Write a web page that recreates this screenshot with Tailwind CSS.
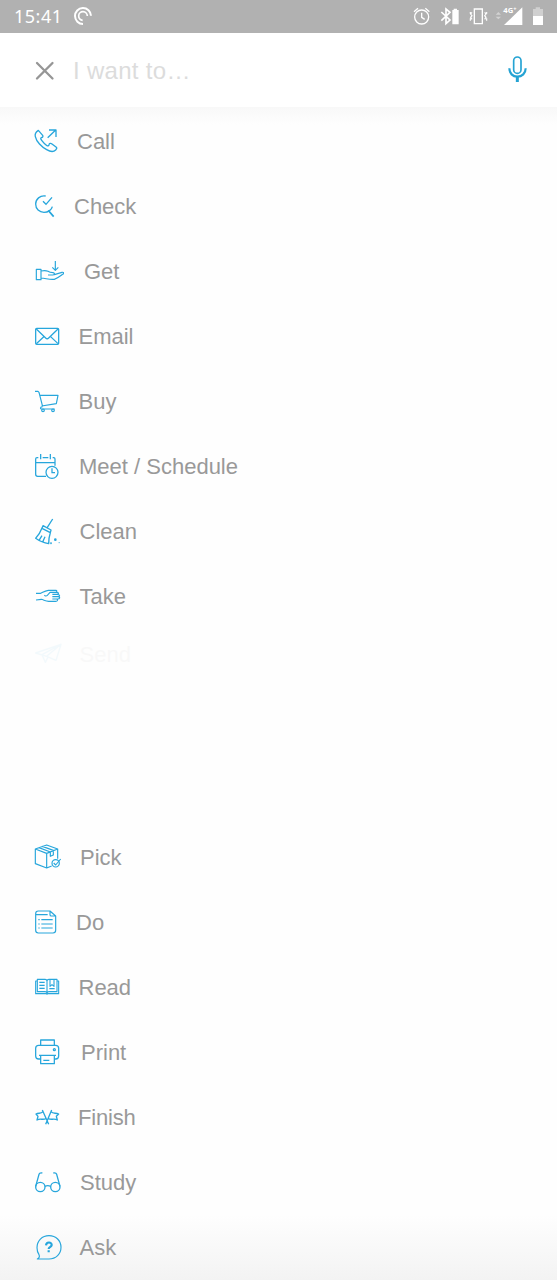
<!DOCTYPE html>
<html lang="en">
<head>
<meta charset="utf-8">
<meta name="viewport" content="width=device-width, initial-scale=1">
<title>I want to…</title>
<script src="https://cdn.jsdelivr.net/npm/@tailwindcss/browser@4"></script>
</head>
<body class="bg-white">
<div class="flex h-[1280px] w-[557px] flex-col overflow-hidden bg-[#fefefe] font-['Liberation_Sans',Arial,sans-serif] text-[22px] text-[#999999]">
  <header class="flex h-[33px] shrink-0 items-center bg-[#b1b1b1] text-white">
    <span class="ml-[14px] w-[58px] font-['Noto_Sans',sans-serif] text-[18px] leading-[33px] tracking-[0.5px]">15:41</span>
    <svg class="h-[33px] w-[24px]" viewBox="216 0 72 99" fill="none" stroke="#fff">
      <path stroke-width="6" d="M273 47A24 24 0 1 0 249 72"/>
      <path stroke-width="5" d="M262 48A13 13 0 1 0 248 61"/>
    </svg>
    <svg class="ml-auto h-[33px] w-[147px]" viewBox="60 0 441 99" fill="none" stroke="#fff" stroke-width="4">
      <circle cx="95" cy="51" r="21"/><path d="M95 38v14l9 6M72 35l12-10M118 35l-12-10"/>
      <path stroke-width="5" d="M154 36l26 24-12 11V27l12 10-26 25"/>
      <path fill="#fff" stroke="none" d="M187 30h4v-4h10v4h5v43h-19z"/>
      <path d="M253 27h24v44h-24z"/><path stroke-width="3.5" d="M246 37l-4 5 4 5-4 5 4 6M241 36v5M241 55v7M284 37l4 5-4 5 4 5-4 6M290 36v5M290 55v7"/>
      <path fill="#d2d2d2" stroke="none" d="M317 44l8-8 8 8zM317 50h16l-8 8z"/>
      <path fill="#fff" stroke="none" d="M342 75l55-53v53z"/>
      <text x="340" y="38" fill="#fff" stroke="#b1b1b1" stroke-width="4" paint-order="stroke" font-size="23" font-weight="700" class="font-['Noto_Sans',sans-serif]">4G<tspan font-size="17" dy="-6">+</tspan></text>
      <path fill="#d0d0d0" stroke="none" d="M429 27h8v-5h13v5h9v21h-30z"/><path fill="#fff" stroke="none" d="M429 48h30v27h-30z"/>
    </svg>
  </header>
  <div class="flex h-[74px] shrink-0 items-center bg-white">
    <svg class="ml-[32px] h-[24px] w-[24px]" viewBox="0 0 24 24" stroke="#969696" stroke-width="2.3" stroke-linecap="round"><path d="M5 5l15.500 15.500M20.500 5L5 20.500"/></svg>
    <span class="ml-[17px] pt-[2px] text-[24px] leading-[74px] tracking-[0.3px] text-[#dcdcdc]">I want to…</span>
    <svg class="ml-auto mr-[28px] h-[32px] w-[24px]" viewBox="345 168 72 96" fill="none" stroke="#25a3d3" stroke-width="5">
      <rect x="371" y="177" width="22" height="49" rx="11"/><path d="M358 211c0 15 10 25 24 25s25-10 25-25" stroke-width="6.500"/><path d="M382 235v17" stroke-width="9"/>
    </svg>
  </div>
  <main class="flex flex-1 flex-col bg-linear-to-b from-[#f8f8f8] from-0% via-[#fefefe] via-[1.5%] to-[#fefefe]">
    <ul class="mt-[2px] flex flex-col fill-none stroke-[#27a6dc] leading-[65px]">
      <li class="flex h-[65px]">
        <svg class="ml-8 mt-4 size-8 shrink-0" viewBox="36 15 96 96" stroke-width="4" stroke-linejoin="round"><path d="M55 31l13 15c2 4 0 6-4 7-3 1-2 4 1 8 5 7 12 13 16 16 4 2 5 0 6-3 1-4 5-5 9-2l13 10c2 2 1 5-2 8-7 7-15 6-27-1C65 81 49 65 46 50c-2-8 1-14 9-19zM83 53l24-23M87 30h21v21"/></svg>
        <span class="ml-[13px]">Call</span>
      </li>
      <li class="flex h-[65px]">
        <svg class="ml-8 mt-4 size-8 shrink-0" viewBox="36 210 96 96" stroke-width="4"><path d="M77 228c-17-3-30 10-30 24 0 15 11 25 25 25 13 0 23-8 25-17M69 244l9 9 18-21"/><path stroke-width="5" d="M84 272l4 3 13 15"/></svg>
        <span class="ml-[10px]">Check</span>
      </li>
      <li class="flex h-[65px]">
        <svg class="ml-8 mt-4 size-8 shrink-0" viewBox="36 15 96 96" stroke-width="3.500" stroke-linejoin="round"><path d="M49 58h14v31H49zM63 63c9-2 15-2 21 1 4 3 8 4 15 4 5 0 6 6 0 7H84M103 74l23-7c5-1 7 3 2 6-8 6-15 12-25 15-14 2-25-3-40-4M106 33v28M97 52l9 9 9-9"/></svg>
        <span class="ml-[20px]">Get</span>
      </li>
      <li class="flex h-[65px]">
        <svg class="ml-8 mt-4 size-8 shrink-0" viewBox="36 210 96 96" stroke-width="3.800" stroke-linejoin="round"><rect x="47" y="235" width="69" height="48" rx="3"/><path d="M49 237l28 27c3 3 6 3 9 0l28-27M49 281l24-22M114 281l-23-22"/></svg>
        <span class="ml-[14.500px]">Email</span>
      </li>
      <li class="flex h-[65px]">
        <svg class="ml-8 mt-4 size-8 shrink-0" viewBox="36 15 96 96" stroke-width="3.500" stroke-linejoin="round"><path d="M45 34h9l3 3 11 43M59 46h55l-5 25-44 7M68 80c-8 0-8 7-3 7h39"/><circle cx="69" cy="91" r="4"/><circle cx="99" cy="91" r="4"/></svg>
        <span class="ml-[14.500px]">Buy</span>
      </li>
      <li class="flex h-[65px]">
        <svg class="ml-8 mt-4 size-8 shrink-0" viewBox="36 210 96 96" stroke-width="3.800"><path d="M55 233h-4q-4 0-4 4v46q0 6 6 6h25M68 233h17M98 233h3q4 0 4 4v20M47 248h58M62 222v16M91 222v16"/><circle cx="96" cy="277" r="18"/><path d="M96 265v13h9"/></svg>
        <span class="ml-[15px]">Meet / Schedule</span>
      </li>
      <li class="flex h-[65px]">
        <svg class="ml-8 mt-4 size-8 shrink-0" viewBox="36 15 96 96" stroke-width="4" stroke-linejoin="round"><path d="M98 27L82 52M69 47l24 13-2 8-25-13zM66 54c-5 13-10 22-19 31 11 8 24 14 39 16 0-12 1-21 5-33M57 91l9-14M68 96l7-16"/><circle cx="93" cy="100" r="1"/><circle cx="106" cy="89" r="2"/><path stroke-width="3" d="M116 98h3"/></svg>
        <span class="ml-[15.500px]">Clean</span>
      </li>
      <li class="flex h-[65px]">
        <svg class="ml-8 mt-4 size-8 shrink-0" viewBox="36 210 96 96" stroke-width="3.300" stroke-linejoin="round"><path d="M48 250h14c8-4 14-8 23-9h22c5 0 5 5 0 6H90l-8 9c-3 3-9 2-8-1M95 247h16c6 0 6 6 0 6H97M111 253c10 0 10 7 2 7H97M113 260c9 0 7 7 0 7H97M109 267c6 1 4 7-2 7H86c-9 0-14-4-22-6l-16 2"/></svg>
        <span class="ml-[15.500px]">Take</span>
      </li>
    </ul>
    <div class="mt-[-7px] flex h-[65px] leading-[65px] opacity-5">
      <svg class="ml-8 mt-4 size-8 shrink-0" viewBox="36 27 96 96" fill="none" stroke="#2caedd" stroke-width="4" stroke-linejoin="round"><path d="M47 72l76-26-15 48-28-12zM123 46L66 77l10 23 8-16M123 46L80 82"/></svg>
      <span class="ml-[15.500px]">Send</span>
    </div>
    <ul class="mt-[138px] flex flex-col fill-none stroke-[#27a6dc] leading-[65px]">
      <li class="flex h-[65px]">
        <svg class="ml-8 mt-4 size-8 shrink-0" viewBox="36 18 96 96" stroke-width="3.500" stroke-linejoin="round"><path d="M46 42l34-12 33 12-33 13zM46 42v44l34 13 15-6M80 55v44M113 42v29M57 38l34 13v13l9-4V46L67 34"/><circle cx="107" cy="85" r="11"/><path d="M101 84l6 6 15-18"/></svg>
        <span class="ml-[16px]">Pick</span>
      </li>
      <li class="flex h-[65px]">
        <svg class="ml-8 mt-4 size-8 shrink-0" viewBox="36 213 96 96" stroke-width="3.500" stroke-linejoin="round"><path d="M90 228H55q-8 0-8 8v50q0 8 8 8h44q8 0 8-8v-43zM90 228v11q0 4 4 4h13M47 239h36"/><path d="M55 254h4M64 254h34M55 267h4M64 267h34M55 279h4M64 279h34"/></svg>
        <span class="ml-[12px]">Do</span>
      </li>
      <li class="flex h-[65px]">
        <svg class="ml-8 mt-4 size-8 shrink-0" viewBox="36 18 96 96" stroke-width="3.300" stroke-linejoin="round"><path d="M52 43h23q6 0 6 6 0-6 6-6h24v37H87q-6 0-6 5 0-5-6-5H52zM52 48h-5v38h29q5 0 5 2 0-2 5-2h30V48h-5M81 49v37M58 52h16M58 61h16M58 70h16M90 43v21l6-5 6 5V43M88 71h16"/></svg>
        <span class="ml-[14.500px]">Read</span>
      </li>
      <li class="flex h-[65px]">
        <svg class="ml-8 mt-4 size-8 shrink-0" viewBox="36 213 96 96" stroke-width="3.800" stroke-linejoin="round"><path d="M62 241v-16h41v16M61 282h-5q-9 0-9-9v-23q0-9 9-9h51q9 0 9 9v23q0 9-9 9h-4M57 271h51M62 271v25h41v-25M70 286h18"/><circle cx="103" cy="254" r="3"/></svg>
        <span class="ml-[17px]">Print</span>
      </li>
      <li class="flex h-[65px]">
        <svg class="ml-8 mt-4 size-8 shrink-0" viewBox="36 18 96 96" stroke-width="4" stroke-linejoin="round"><path d="M67 45l19 43M95 45L77 88M69 50c-7 8-13 2-21 7l6 7-3 11c10-6 17 1 27-4M93 50c7 8 14 2 23 7l-7 7 3 11c-10-6-17 1-27-4"/></svg>
        <span class="ml-[14px] tracking-[-0.2px]">Finish</span>
      </li>
      <li class="flex h-[65px]">
        <svg class="ml-8 mt-4 size-8 shrink-0" viewBox="36 213 96 96" stroke-width="4"><circle cx="61" cy="276" r="14"/><circle cx="106" cy="276" r="14"/><path d="M75 274q8-4 17 0M47 274l10-36q2-6 10-4M120 274l-10-36q-2-6-10-4"/></svg>
        <span class="ml-[16px]">Study</span>
      </li>
      <li class="flex h-[65px] bg-linear-to-b from-[#fefefe] to-[#f3f3f3]">
        <svg class="ml-8 mt-4 size-8 shrink-0" viewBox="36 63 96 96" stroke-width="3.500" stroke-linejoin="round"><path d="M52 147c7-4 8-7 5-13-4-6-6-13-6-21 0-20 15-36 36-36s36 15 36 35-15 35-36 35z"/><path stroke-width="6.500" d="M78 106c1-12 18-10 17-1-1 7-9 6-9 12M86 121v6"/></svg>
        <span class="ml-[15.500px]">Ask</span>
      </li>
    </ul>
  </main>
</div>
</body>
</html>
